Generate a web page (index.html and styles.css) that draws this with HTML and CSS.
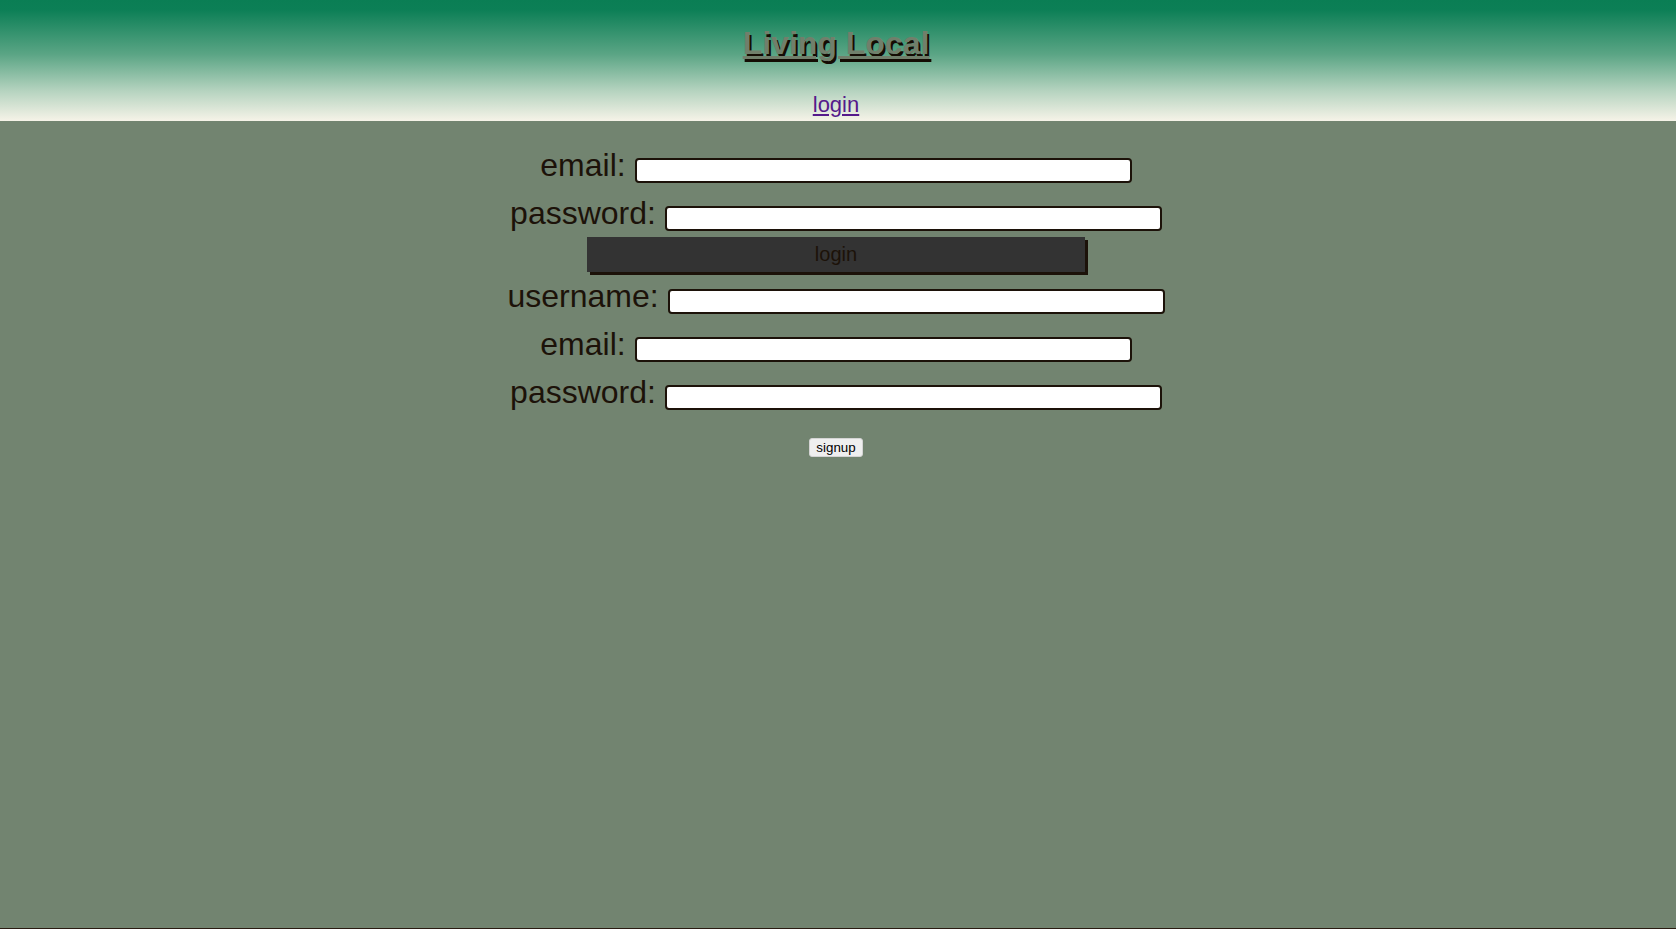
FILE: index.html
```html
<!DOCTYPE html>
<html lang="en">
<head>
<meta charset="utf-8">
<title>Living Local</title>
<link rel="stylesheet" href="styles.css">
</head>
<body class="page">
  <header class="site-header">
    <h1 class="site-title">Living Local</h1>
    <nav class="site-nav"><a class="nav-link" href="#">login</a></nav>
  </header>
  <main class="main">
    <form class="auth-form">
      <div class="field-list">
        <div class="field"><label class="field-label">email:</label><input class="field-input" type="email"></div>
        <div class="field"><label class="field-label">password:</label><input class="field-input" type="password"></div>
      </div>
      <button class="login-btn" type="button">login</button>
    </form>
    <form class="auth-form">
      <div class="field-list">
        <div class="field"><label class="field-label">username:</label><input class="field-input" type="text"></div>
        <div class="field"><label class="field-label">email:</label><input class="field-input" type="email"></div>
        <div class="field"><label class="field-label">password:</label><input class="field-input" type="password"></div>
      </div>
      <button class="signup-btn" type="button">signup</button>
    </form>
  </main>
</body>
</html>
```

FILE: styles.css
```css
html {
  background: #728470;
}

.page {
  margin: 0;
  min-height: 100vh;
  box-sizing: border-box;
  border-bottom: 1px solid #2a1c12;
  background: #728470;
  font-family: "Liberation Sans", Arial, sans-serif;
  color: #1c1209;
}

.site-header {
  height: 121px;
  box-sizing: border-box;
  padding: 25px 4px 0 0;
  background: linear-gradient(to bottom, #0a7e54 0%, #0c7f56 8%, #5ba585 45%, #b5d3bf 75%, #f6f3e8 100%);
  text-align: center;
}

.site-title {
  margin: 0;
  font-size: 32px;
  line-height: 37px;
  font-weight: bold;
  color: #717f6b;
  text-decoration: underline;
  text-shadow: 2px 3px 0 #140c04;
}

.site-nav {
  margin-top: 30px;
  font-size: 22px;
  line-height: 25px;
}

.nav-link {
  color: #551a8b;
  text-decoration: underline;
}

.main {
  padding: 26px 4px 0 0;
}

.auth-form {
  margin: 0;
  display: flex;
  flex-direction: column;
  align-items: center;
}

.field-list {
  display: flex;
  flex-direction: column;
  gap: 12px;
  align-self: stretch;
}

.field {
  display: flex;
  justify-content: center;
  align-items: flex-end;
  gap: 9px;
}

.field-label {
  font-size: 32px;
  line-height: 36px;
  color: #1c1209;
}

.field-input {
  width: 497px;
  height: 25px;
  box-sizing: border-box;
  margin: 0;
  padding: 1px 4px;
  border: 2px solid #1c1209;
  border-radius: 4px;
  background: #fff;
  font-family: "Liberation Sans", Arial, sans-serif;
  font-size: 13.33px;
}

.login-btn {
  width: 498px;
  height: 34.4px;
  margin: 6.4px 0 6.6px;
  padding: 0;
  border: none;
  background: #333333;
  box-shadow: 3px 3px 0 #1c1209;
  color: #1c1209;
  font-family: "Liberation Sans", Arial, sans-serif;
  font-size: 20px;
}

.signup-btn {
  margin-top: 27.5px;
  height: 19.3px;
  padding: 0 6px;
  border: 1px solid #d4d4d4;
  border-radius: 3px;
  background: #efefef;
  color: #000;
  font-family: "Liberation Sans", Arial, sans-serif;
  font-size: 13.33px;
  line-height: 15px;
}
```
